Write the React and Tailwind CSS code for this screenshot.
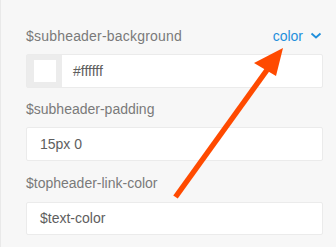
export default function App() {
  const font = { fontFamily: '"Liberation Sans", Arial, sans-serif' };
  return (
    <div className="relative w-[336px] h-[247px] overflow-hidden bg-[#f7f7f7] border-l border-[#e9e9e9]" style={font}>
      <div className="flex flex-col pl-[25px] pr-[13px] pt-[26px]">
        <div className="flex items-center justify-between h-[20px] text-[14px]">
          <span className="text-[#7a7a7a] tracking-[0.2px]">$subheader-background</span>
          <span className="flex items-center text-[#1f8fdc]">
            color
            <svg width="12" height="8" viewBox="0 0 12 8" className="ml-[7px] mr-[1px]">
              <path d="M1.5 1.5 L6 5.5 L10.5 1.5" fill="none" stroke="#1f8fdc" strokeWidth="1.8" />
            </svg>
          </span>
        </div>
        <div className="mt-[8px] flex h-[34px] bg-white border border-[#ebebeb] rounded-[2px]">
          <div className="w-[35px] bg-[#ececec] flex items-center justify-center">
            <div className="w-[22px] h-[22px] bg-white" />
          </div>
          <div className="flex items-center pl-[11px] text-[14px] text-[#5e5e5e]">#ffffff</div>
        </div>
        <div className="mt-[11px] h-[20px] flex items-center text-[14px] text-[#7a7a7a]">$subheader-padding</div>
        <div className="mt-[8px] flex items-center h-[34px] bg-white border border-[#ebebeb] rounded-[2px] pl-[13px] text-[14px] text-[#5e5e5e]">15px 0</div>
        <div className="mt-[12px] h-[20px] flex items-center text-[14px] text-[#7a7a7a]">$topheader-link-color</div>
        <div className="mt-[9px] flex items-center h-[33px] bg-white border border-[#ebebeb] rounded-[2px] pl-[13px] text-[14px] text-[#5e5e5e]">$text-color</div>
      </div>
      <svg className="absolute left-0 top-0" width="336" height="247" viewBox="0 0 336 247">
        <line x1="174.5" y1="197" x2="266" y2="70" stroke="#ff4a00" strokeWidth="5.5" />
        <polygon points="282,48 253,63 275,76" fill="#ff4a00" />
      </svg>
    </div>
  );
}
